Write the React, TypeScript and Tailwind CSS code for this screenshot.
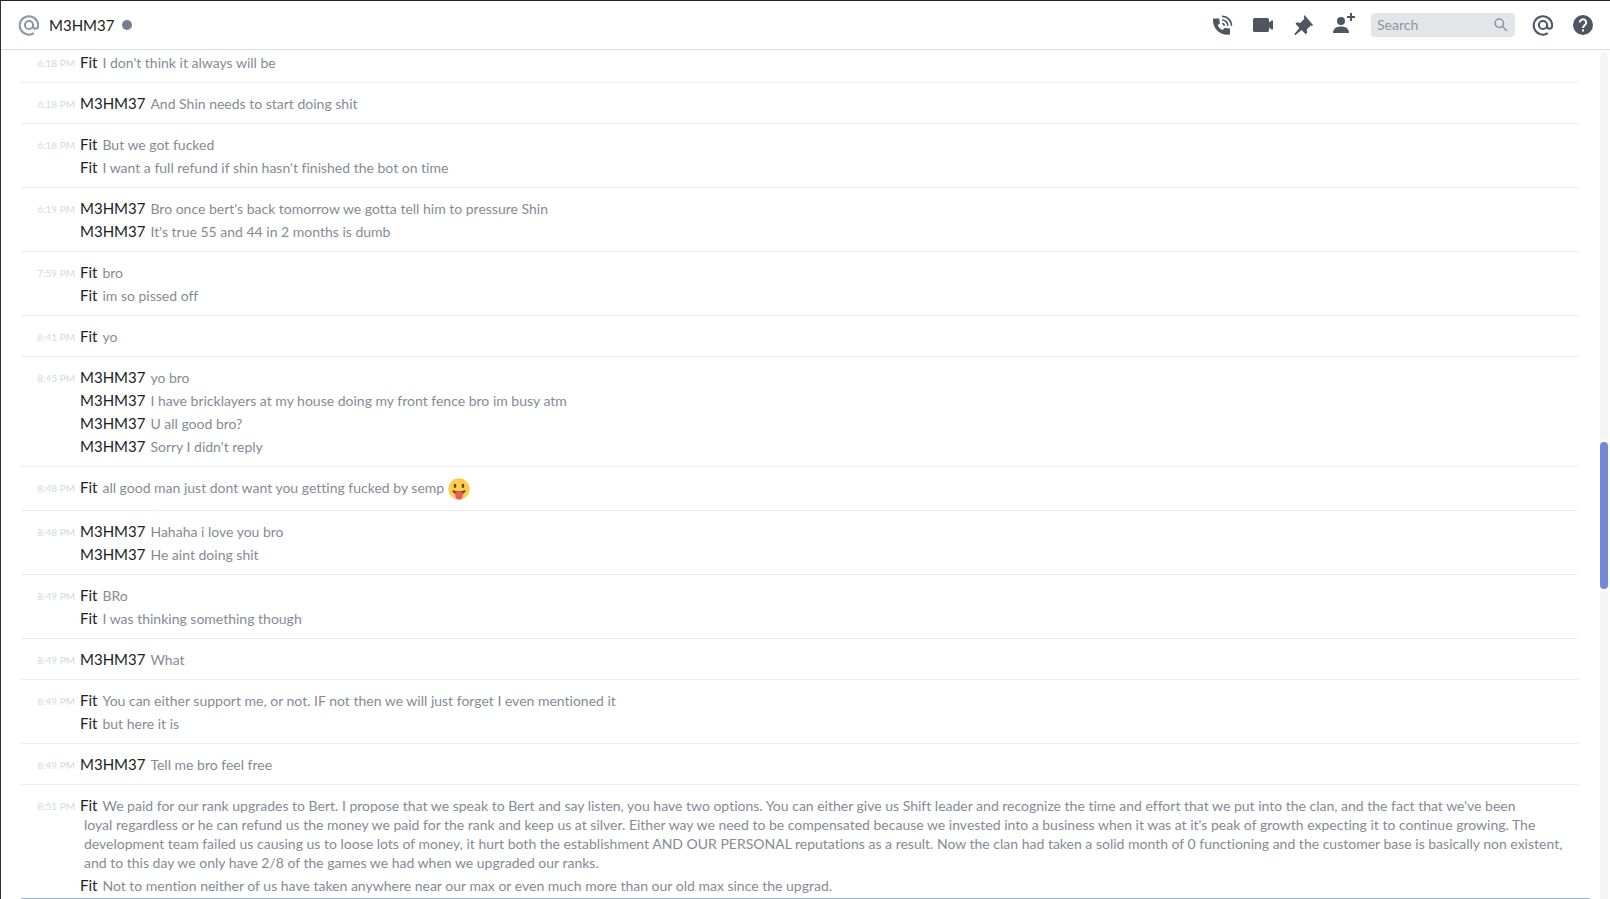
import type { ReactNode } from "react";

type Group = { time: string; author: string; lines: ReactNode[] };

function TongueEmoji() {
  return (
    <svg
      role="img"
      aria-label="face with tongue"
      viewBox="0 0 36 36"
      className="inline-block size-[22px] align-middle"
    >
      <circle cx="18" cy="18" r="17.500" fill="#ffcc4d" />
      <ellipse cx="11.500" cy="13" rx="2.200" ry="3.400" fill="#664500" />
      <ellipse cx="24.500" cy="13" rx="2.200" ry="3.400" fill="#664500" />
      <path
        d="M28.500 20.300c-.3-.3-.8-.4-1.200-.2C27.200 20.200 23 22 18 22s-9.200-1.800-9.300-1.900c-.4-.2-.9-.1-1.200.2-.3.3-.4.800-.2 1.200C7.500 21.900 10.800 27.500 18 27.500s10.500-5.600 10.700-6c.2-.4.1-.9-.2-1.200z"
        fill="#664500"
      />
      <path
        d="M12 22c2 .7 4 1 6 1s4-.3 6-1v7a6 6 0 0 1-12 0z"
        fill="#e8596e"
      />
    </svg>
  );
}

const groups: Group[] = [
  { time: "6:18 PM", author: "Fit", lines: ["I don't think it always will be"] },
  {
    time: "6:18 PM",
    author: "M3HM37",
    lines: ["And Shin needs to start doing shit"],
  },
  {
    time: "6:18 PM",
    author: "Fit",
    lines: [
      "But we got fucked",
      "I want a full refund if shin hasn't finished the bot on time",
    ],
  },
  {
    time: "6:19 PM",
    author: "M3HM37",
    lines: [
      "Bro once bert's back tomorrow we gotta tell him to pressure Shin",
      "It's true 55 and 44 in 2 months is dumb",
    ],
  },
  { time: "7:59 PM", author: "Fit", lines: ["bro", "im so pissed off"] },
  { time: "8:41 PM", author: "Fit", lines: ["yo"] },
  {
    time: "8:45 PM",
    author: "M3HM37",
    lines: [
      "yo bro",
      "I have bricklayers at my house doing my front fence bro im busy atm",
      "U all good bro?",
      "Sorry I didn't reply",
    ],
  },
  {
    time: "8:48 PM",
    author: "Fit",
    lines: [
      <>
        all good man just dont want you getting fucked by semp <TongueEmoji />
      </>,
    ],
  },
  {
    time: "8:48 PM",
    author: "M3HM37",
    lines: ["Hahaha i love you bro", "He aint doing shit"],
  },
  {
    time: "8:49 PM",
    author: "Fit",
    lines: ["BRo", "I was thinking something though"],
  },
  { time: "8:49 PM", author: "M3HM37", lines: ["What"] },
  {
    time: "8:49 PM",
    author: "Fit",
    lines: [
      "You can either support me, or not. IF not then we will just forget I even mentioned it",
      "but here it is",
    ],
  },
  { time: "8:49 PM", author: "M3HM37", lines: ["Tell me bro feel free"] },
  {
    time: "8:51 PM",
    author: "Fit",
    lines: [
      <>
        We paid for our rank upgrades to Bert. I propose that we speak to Bert
        and say listen, you have two options. You can either give us Shift
        leader and recognize the time and effort that we put into the clan, and
        the fact that we've been
        <br />
        loyal regardless or he can refund us the money we paid for the rank and
        keep us at silver. Either way we need to be compensated because we
        invested into a business when it was at it's peak of growth expecting it
        to continue growing. The
        <br />
        development team failed us causing us to loose lots of money, it hurt
        both the establishment AND OUR PERSONAL reputations as a result. Now the
        clan had taken a solid month of 0 functioning and the customer base is
        basically non existent,
        <br />
        and to this day we only have 2/8 of the games we had when we upgraded
        our ranks.
      </>,
      "Not to mention neither of us have taken anywhere near our max or even much more than our old max since the upgrad.",
    ],
  },
];

function AtIcon() {
  return (
    <svg
      viewBox="0 0 24 24"
      fill="none"
      stroke="currentColor"
      strokeWidth="2"
      className="size-6"
      aria-hidden="true"
    >
      <path d="M16.800 20.200A9.200 9.200 0 1 1 21.100 12v1.300a2.500 2.500 0 0 1-5 0V12" />
      <circle cx="12" cy="12" r="4.100" />
    </svg>
  );
}

function IconButton({ label, children }: { label: string; children: ReactNode }) {
  return (
    <button type="button" aria-label={label} className="size-6 text-[#4f5660]">
      {children}
    </button>
  );
}

function Header() {
  return (
    <header className="flex h-[50px] shrink-0 items-center justify-between border-t border-b border-t-[#202225] border-b-[#d9dadc] pr-[15px] pl-4">
      <div className="flex items-center">
        <span className="text-[#8e95a1]">
          <AtIcon />
        </span>
        <h1 className="ml-2 text-[15px] text-[#1c1e22]">M3HM37</h1>
        <span className="ml-2 size-[10px] rounded-full bg-[#747f8d]" />
      </div>
      <div className="flex items-center gap-4">
        <IconButton label="Start voice call">
          <svg viewBox="0 0 24 24" fill="currentColor" aria-hidden="true">
            <path d="M2 5.500h6.200l.7 5-2.200 1.700c1.100 2.400 2.500 3.800 4.900 4.800l1.900-2.100 5.500.7V21.600C9 23 1 15 2 5.500z" />
            <path
              d="M11 3.400a9 9 0 0 1 9.400 9.400M11 7a5.600 5.600 0 0 1 5.800 5.800M11.200 10.500a2.200 2.200 0 0 1 2 2.200"
              fill="none"
              stroke="currentColor"
              strokeWidth="1.700"
            />
          </svg>
        </IconButton>
        <IconButton label="Start video call">
          <svg viewBox="0 0 24 24" fill="currentColor" aria-hidden="true">
            <path d="M3.500 5h13A1.500 1.500 0 0 1 18 6.500V9.500l2.500-2H22v9h-1.500l-2.500-2v3a1.500 1.500 0 0 1-1.500 1.500h-13A1.500 1.500 0 0 1 2 17.500v-11A1.500 1.500 0 0 1 3.500 5z" />
          </svg>
        </IconButton>
        <IconButton label="Pinned messages">
          <svg viewBox="0 0 24 24" fill="currentColor" aria-hidden="true">
            <path d="m22 12-.9.900-1.300-.5-4.100 4.100.5 3.300-1.500 1.400-4.100-4.100-6.300 5.200-1.100-1.100 5.200-6.300-3.900-4.200 1.400-1.400 3.300.6 4.100-4.100-.5-1.500L13.500 2z" />
          </svg>
        </IconButton>
        <IconButton label="Add friends to DM">
          <svg viewBox="0 0 24 24" fill="currentColor" aria-hidden="true">
            <path d="M24 3h-3V0h-2v3h-3v2h3v3h2V5h3z" />
            <circle cx="10" cy="8" r="4" />
            <path d="M2 20c0-4.500 3.500-6.500 8-6.500s8 2 8 6.500z" />
          </svg>
        </IconButton>
        <label className="flex h-6 w-36 items-center rounded bg-[#e3e5e8] px-[6px]">
          <input
            type="text"
            aria-label="Search"
            placeholder="Search"
            className="min-w-0 flex-1 text-sm text-[#2e3338] outline-none placeholder:text-[#8f969e]"
          />
          <svg
            viewBox="0 0 16 16"
            fill="none"
            stroke="#8f969e"
            strokeWidth="1.500"
            className="size-4"
            aria-hidden="true"
          >
            <circle cx="6.300" cy="6.300" r="4.200" />
            <path d="m9.500 9.500 4.500 4.500" />
          </svg>
        </label>
        <IconButton label="Mentions">
          <AtIcon />
        </IconButton>
        <IconButton label="Help">
          <svg viewBox="0 0 24 24" fill="currentColor" aria-hidden="true">
            <circle cx="12" cy="12" r="10" />
            <path
              d="M8.800 9.600a3.200 3.200 0 1 1 5 2.600c-1.200.8-1.800 1.300-1.800 2.800"
              fill="none"
              stroke="#fff"
              strokeWidth="2"
            />
            <path d="M11 16.500h2v2h-2z" fill="#fff" />
          </svg>
        </IconButton>
      </div>
    </header>
  );
}

function MessageGroup({ group }: { group: Group }) {
  return (
    <li className="group">
      <div className="flex pt-[9px] pb-2 group-first:pt-px">
        <time className="w-[74px] shrink-0 pt-[3px] text-right text-[10px] leading-[19px] text-[#d3d9e0]">
          {group.time}
        </time>
        <div className="min-w-0 flex-1 pl-[5px]">
          {group.lines.map((line, i) => (
            <p
              key={i}
              className="py-[2px] pl-1 -indent-1 text-sm leading-[19px] text-[#848b94]"
            >
              <span className="mr-[5px] text-[15px] leading-none text-[#1c1e22]">
                {group.author}
              </span>
              {line}
            </p>
          ))}
        </div>
      </div>
      <hr className="mr-[22px] ml-5 border-[#ebecee] group-last:hidden" />
    </li>
  );
}

export default function App() {
  return (
    <div className="flex h-screen flex-col overflow-hidden border-l border-[#2f3136] bg-white font-['Lato',sans-serif] [font-variant-ligatures:none]">
      <Header />
      <div className="flex min-h-0 flex-1">
        <main className="flex min-w-0 flex-1 flex-col">
          <ol className="min-h-0 flex-1 overflow-hidden">
            {groups.map((group, i) => (
              <MessageGroup key={i} group={group} />
            ))}
          </ol>
          <div className="mr-[10px] ml-5 h-px rounded-full bg-[#9fb0bf]" />
        </main>
        <div className="mt-[2px] mr-[2px] flex w-2 flex-col rounded-t-full bg-[#f5f5f5]">
          <div className="h-[46%]" />
          <div className="h-[147px] rounded-full bg-[#7289da] ring-3 ring-white" />
        </div>
      </div>
    </div>
  );
}
